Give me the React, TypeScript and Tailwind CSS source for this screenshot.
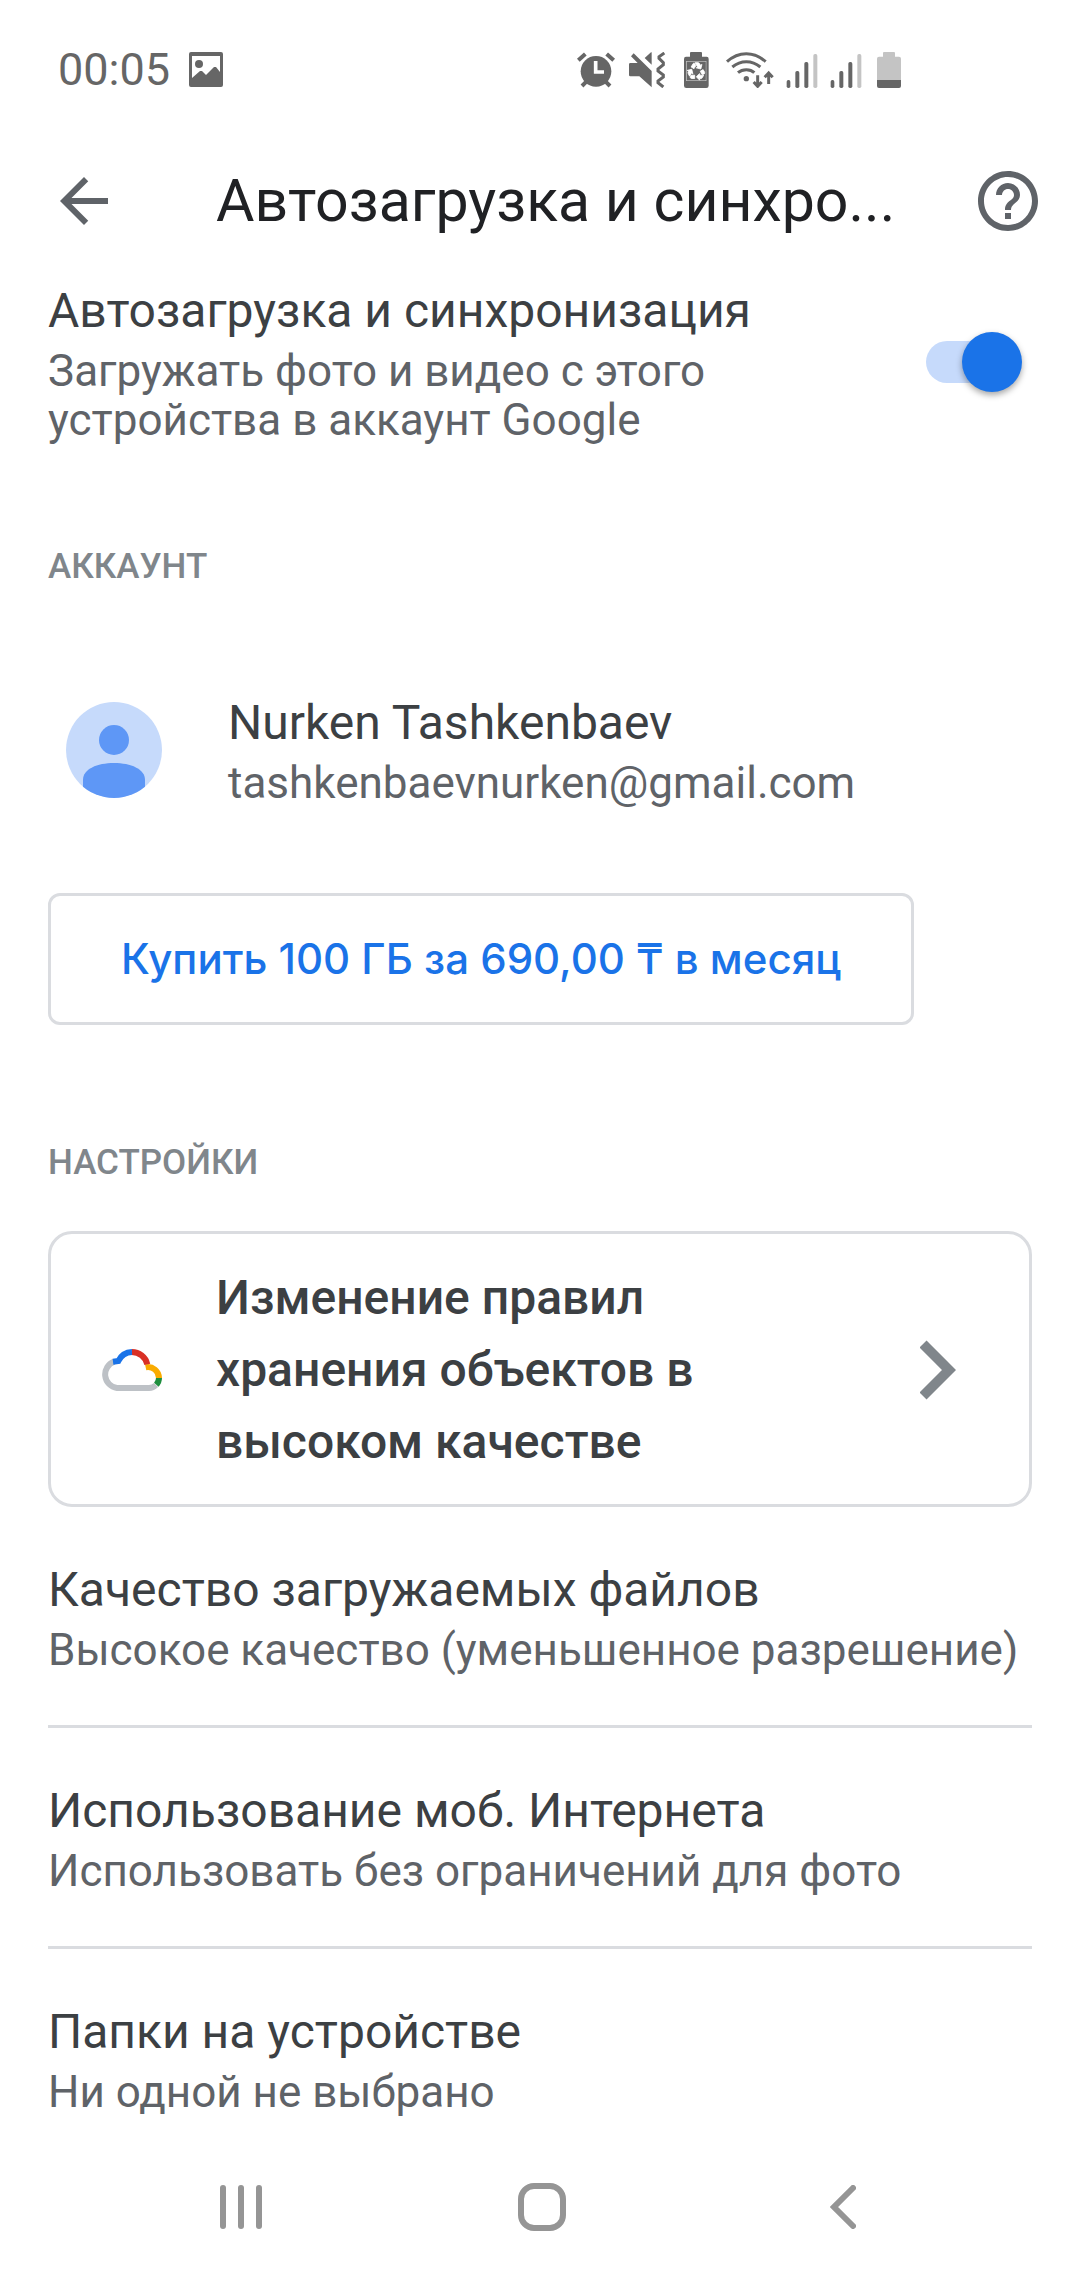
import { useState } from 'react';
import type { ReactNode } from 'react';
import { MdArrowBack, MdHelpOutline, MdRecycling } from 'react-icons/md';

const settings = [
  { title: 'Качество загружаемых файлов', value: 'Высокое качество (уменьшенное разрешение)' },
  { title: 'Использование моб. Интернета', value: 'Использовать без ограничений для фото' },
  { title: 'Папки на устройстве', value: 'Ни одной не выбрано' },
];

function SignalIcon() {
  return (
    <svg width="32" height="36" viewBox="0 0 96 108" fill="currentColor">
      <rect x="2" y="84" width="11" height="24" rx="5" />
      <rect x="28" y="57" width="12" height="51" rx="5" />
      <rect x="55" y="30" width="12" height="78" rx="5" />
      <rect x="82" y="6" width="12" height="102" rx="5" fill="#c4c4c4" />
    </svg>
  );
}

function StatusBar() {
  return (
    <div className="flex h-[140px] items-center justify-between pl-[58px] pr-[174px] text-[#666666]">
      <div className="flex items-center gap-[18px]">
        <span className="text-[45px] leading-[56px]">00:05</span>
        <svg width="36" height="36" viewBox="0 0 36 36">
          <path
            fill="currentColor"
            fillRule="evenodd"
            d="M3 0h30a2 2 0 0 1 2 2v31a2 2 0 0 1-2 2H3a2 2 0 0 1-2-2V2a2 2 0 0 1 2-2zM4 4v22l8-7h2l4 4 8-8h2l4 5V4z"
          />
          <circle cx="11" cy="12" r="4" fill="currentColor" />
        </svg>
      </div>

      <div className="flex items-center gap-3">
        {/* Alarm */}
        <svg width="40" height="36" viewBox="108 66 120 108" fill="none" stroke="currentColor">
          <path strokeWidth="12" d="M115 91L136 72M221 91L200 72M126 168L142 152M210 168L194 152" />
          <circle cx="168" cy="124" r="46" fill="currentColor" stroke="none" />
          <path stroke="#fff" strokeWidth="11" d="M167 93V126H192" />
        </svg>
        {/* Muted, vibrate */}
        <svg width="40" height="36" viewBox="264 66 120 108" fill="none" stroke="currentColor">
          <path
            fill="currentColor"
            stroke="none"
            d="M271 99H293L273 79L281 70L335 123V172L298 139H271Q267 139 267 135V103Q267 99 271 99ZM314 84L333 67H335V104Z"
          />
          <path strokeWidth="9" d="M373 69L357 80V85L370 98V104L354 117V123L370 135V141L354 153V158L370 171" />
        </svg>
        {/* Power saving */}
        <svg width="32" height="36" viewBox="420 66 96 108">
          <path
            fill="currentColor"
            d="M453 66H483Q486 66 486 69V80H500Q506 80 506 87V167Q506 174 499 174H439Q432 174 432 167V87Q432 80 438 80H450V69Q450 66 453 66Z"
          />
          <MdRecycling x="439" y="93" size={60} color="#fff" stroke="#fff" strokeWidth="1" />
        </svg>
        {/* Wi-Fi */}
        <svg width="50" height="36" viewBox="552 66 150 108" fill="none" stroke="currentColor">
          <path strokeWidth="9" d="M561 95Q587 71 619 71T677 95M577 111Q596 95 619 95T661 111M594 128Q604 119 619 119T643 128" />
          <circle cx="619" cy="146" r="8" fill="currentColor" stroke="none" />
          <path strokeWidth="9" d="M653 136V169M641 156L653 169L665 156M686 162V130M674 142L686 129L698 142" />
        </svg>
        <SignalIcon />
        <SignalIcon />
        {/* Battery */}
        <svg width="32" height="36" viewBox="1002 66 96 108">
          <path fill="#c4c4c4" d="M1032 66H1062Q1065 66 1065 69V80H1077Q1083 80 1083 86V150H1011V86Q1011 80 1017 80H1029V69Q1029 66 1032 66Z" />
          <path fill="currentColor" d="M1011 150H1083V168Q1083 174 1077 174H1017Q1011 174 1011 168Z" />
        </svg>
      </div>
    </div>
  );
}

function CloudIcon() {
  return (
    <svg className="shrink-0" width="60" height="42" viewBox="66 83 180 126" fill="none" strokeWidth="18">
      <path stroke="#bdc1c6" d="M102 121A41 41 0 0 0 111 200H207Q219 200 228 191" />
      <path stroke="#1e8e3e" d="M229 190Q237 181 237 169" />
      <path stroke="#f9ab00" d="M237 170A33 33 0 0 0 197 138" />
      <path stroke="#d93025" d="M155 92A48 48 0 0 1 202 129" />
      <path stroke="#1a73e8" d="M99 121L115 119Q128 93 156 92" />
    </svg>
  );
}

function SectionLabel({ children }: { children: ReactNode }) {
  return (
    <h2 className="text-[35px] leading-[42px] font-medium text-[#80868b]">{children}</h2>
  );
}

function TwoLine({ title, value }: { title: string; value: string }) {
  return (
    <span className="block text-left">
      <span className="block text-[48px] leading-[64px] text-[#3c4043]">{title}</span>
      <span className="mt-1 block text-[44px] leading-[49px] text-[#5f6368]">{value}</span>
    </span>
  );
}

export default function App() {
  const [backup, setBackup] = useState(true);

  return (
    <div className="flex min-h-screen flex-col bg-white font-['Roboto',sans-serif]">
      <StatusBar />

      <header className="flex h-[122px] items-center pl-12 pr-9">
        <button aria-label="Назад" className="text-[#5f6368]">
          <MdArrowBack size={72} />
        </button>
        <h1 className="ml-24 flex-1 whitespace-nowrap text-[59px] leading-[72px] text-[#202124]">
          Автозагрузка и синхро...
        </h1>
        <button aria-label="Справка" className="text-[#5f6368]">
          <MdHelpOutline size={72} />
        </button>
      </header>

      <main className="px-12 pt-[17px]">
        <div className="flex items-center justify-between">
          <label htmlFor="backup" className="max-w-[720px]">
            <TwoLine
              title="Автозагрузка и синхронизация"
              value="Загружать фото и видео с этого устройства в аккаунт Google"
            />
          </label>
          <input
            id="backup"
            type="checkbox"
            role="switch"
            checked={backup}
            onChange={(e) => setBackup(e.target.checked)}
            className="relative mr-[22px] h-[42px] w-[84px] shrink-0 appearance-none rounded-full bg-gray-300 before:absolute before:-left-3 before:-top-[9px] before:size-[60px] before:rounded-full before:bg-white before:shadow-[0_3px_6px_rgba(0,0,0,0.35)] checked:bg-[#c6dafb] checked:before:left-9 checked:before:bg-[#1a73e8]"
          />
        </div>

        <section className="mt-[101px]">
          <SectionLabel>АККАУНТ</SectionLabel>
          <button className="mt-[103px] flex items-center gap-[66px] pl-[18px]">
            <svg className="shrink-0" width="96" height="96" viewBox="0 0 96 96">
              <clipPath id="avatar">
                <circle cx="48" cy="48" r="48" />
              </clipPath>
              <circle cx="48" cy="48" r="48" fill="#c6dafb" />
              <g fill="#5e97f6" clipPath="url(#avatar)">
                <circle cx="48" cy="38" r="15" />
                <path d="M17 96V78C17 67 31 61 48 61S79 67 79 78V96Z" />
              </g>
            </svg>
            <TwoLine title="Nurken Tashkenbaev" value="tashkenbaevnurken@gmail.com" />
          </button>
          <button className="mt-[85px] block rounded-xl border-3 border-[#dadce0] px-[70px] py-[35px] font-['Inter',sans-serif] text-[42px] leading-[56px] font-medium text-[#1a73e8]">
            Купить 100 ГБ за 690,00 ₸ в месяц
          </button>
        </section>

        <section className="mt-[117px]">
          <SectionLabel>НАСТРОЙКИ</SectionLabel>
          <button className="mt-[47px] flex w-full items-center rounded-3xl border-3 border-[#dadce0] pt-7 pb-[26px] pl-[51px] pr-[73px] text-left">
            <CloudIcon />
            <span className="ml-[54px] mr-16 flex-1 text-[48px] leading-[72px] font-medium text-[#3c4043]">
              Изменение правил хранения объектов в высоком качестве
            </span>
            <svg className="shrink-0" width="36" height="60" viewBox="0 0 36 60">
              <path fill="none" stroke="#80868b" strokeWidth="10" d="M3 4L29 30L3 56" />
            </svg>
          </button>

          <div className="divide-y-3 divide-[#dadce0]">
            {settings.map((item) => (
              <button key={item.title} className="block w-full pt-[51px] pb-[50px] last:pb-4">
                <TwoLine title={item.title} value={item.value} />
              </button>
            ))}
          </div>
        </section>
      </main>

      <nav className="mt-auto flex h-[146px] items-center pl-[90px] pr-[86px] text-[#959595]">
        <button aria-label="Недавние" className="flex flex-1 justify-center">
          <svg width="42" height="44" viewBox="0 0 42 44" fill="currentColor">
            <rect width="6" height="44" rx="3" />
            <rect x="18" width="6" height="44" rx="3" />
            <rect x="36" width="6" height="44" rx="3" />
          </svg>
        </button>
        <button aria-label="Главный экран" className="flex flex-1 justify-center">
          <svg width="48" height="48" viewBox="0 0 48 48">
            <rect x="3" y="3" width="42" height="42" rx="13" fill="none" stroke="currentColor" strokeWidth="6" />
          </svg>
        </button>
        <button aria-label="Назад" className="flex flex-1 justify-center">
          <svg width="26" height="44" viewBox="0 0 26 44">
            <path fill="none" stroke="currentColor" strokeWidth="6" strokeLinecap="round" d="M23 3L4 22L23 41" />
          </svg>
        </button>
      </nav>
    </div>
  );
}
